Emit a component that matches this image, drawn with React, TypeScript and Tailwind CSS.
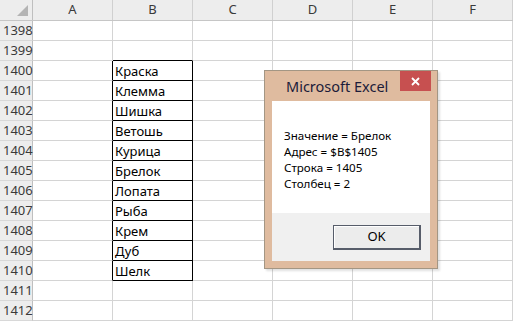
import React from "react";

const columns = ["A", "B", "C", "D", "E", "F"];
const items: Record<number, string> = {
  1400: "Краска",
  1401: "Клемма",
  1402: "Шишка",
  1403: "Ветошь",
  1404: "Курица",
  1405: "Брелок",
  1406: "Лопата",
  1407: "Рыба",
  1408: "Крем",
  1409: "Дуб",
  1410: "Шелк",
};

const rows = Array.from({ length: 15 }, (_, i) => 1398 + i);

function Row({ n }: { n: number }) {
  const inB = items[n] !== undefined;
  const aboveB = n === 1399;
  return (
    <div className="flex h-[20px]">
      <div className="w-[33px] h-full shrink-0 bg-[#ededed] border-r border-b border-r-[#bfbfbf] border-b-[#d8d8d8] text-[13px] leading-[19px] text-[#3a3a3a] pl-[3px]">
        {n}
      </div>
      {columns.map((c) => {
        const isB = c === "B";
        const isA = c === "A";
        let cls = "w-[80px] h-full shrink-0 border-r border-b border-[#d4d4d4]";
        if (isB && inB) cls = "w-[80px] h-full shrink-0 border-r border-b border-black pl-[2px] text-[13px] leading-[20px] text-black";
        if (isB && aboveB) cls = "w-[80px] h-full shrink-0 border-r border-b border-r-[#d4d4d4] border-b-black";
        if (isA && inB) cls = "w-[80px] h-full shrink-0 border-r border-b border-r-black border-b-[#d4d4d4]";
        return (
          <div key={c} className={cls}>
            {isB && inB ? items[n] : null}
          </div>
        );
      })}
    </div>
  );
}

export default function App() {
  return (
    <div className="relative w-[513px] h-[321px] overflow-hidden bg-white font-['Noto_Sans',sans-serif]">
      <div className="flex h-[21px] bg-[#ededed] border-b border-[#c6c6c6]">
        <div className="relative w-[33px] h-full shrink-0 border-r border-[#bfbfbf]">
          <svg className="absolute right-[4px] bottom-[4px]" width="11" height="11" viewBox="0 0 11 11">
            <polygon points="11,0 11,11 0,11" fill="#b4b4b4" />
          </svg>
        </div>
        {columns.map((c) => (
          <div
            key={c}
            className="w-[80px] h-full shrink-0 border-r border-[#d0d0d0] text-center text-[13px] leading-[19px] text-[#3a3a3a]"
          >
            {c}
          </div>
        ))}
      </div>
      {rows.map((n) => (
        <Row key={n} n={n} />
      ))}

      <div className="absolute left-[264px] top-[70px] w-[174px] h-[199px] border border-[#a39684] bg-[#dfbb9f] px-[7px] pb-[7px] shadow-[2px_2px_2px_rgba(0,0,0,0.12)] flex flex-col">
        <div className="relative h-[30px] shrink-0">
          <div className="pl-[14px] pt-[5px] text-[14.5px] leading-[20px] text-[#1c1c3a]">Microsoft Excel</div>
          <div className="absolute top-0 right-[-1px] w-[31px] h-[20px] bg-[#c75050] flex items-center justify-center">
            <svg width="9" height="9" viewBox="0 0 9 9">
              <path d="M1 1 L8 8 M8 1 L1 8" stroke="white" strokeWidth="1.8" />
            </svg>
          </div>
        </div>
        <div className="h-[112px] shrink-0 bg-white pl-[12px] pt-[27px] text-[11.6px] leading-[16px] text-black">
          <div>Значение = Брелок</div>
          <div>Адрес = $B$1405</div>
          <div>Строка = 1405</div>
          <div>Столбец = 2</div>
        </div>
        <div className="flex-1 bg-[#f0f0f0] flex justify-end items-start pt-[12px] pr-[9px]">
          <div className="w-[88px] h-[25px] border border-[#575d6a] border-r-2 border-b-2 bg-[#ececec] shadow-[inset_1px_1px_0_#ffffff] flex items-center justify-center text-[13px] text-black">
            OK
          </div>
        </div>
      </div>
    </div>
  );
}
